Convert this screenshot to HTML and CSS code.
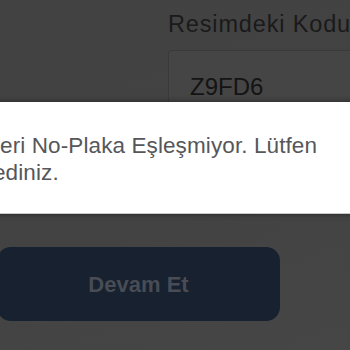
FILE: index.html
```html
<!DOCTYPE html>
<html lang="tr">
<head>
<meta charset="utf-8">
<title>Doğrulama</title>
<link rel="stylesheet" href="styles.css">
</head>
<body>
<main class="page">
  <div class="field">
    <label class="field-label" for="code">Resimdeki Kodu</label>
    <div class="field-input" id="code">Z9FD6</div>
  </div>
  <div class="actions">
    <button class="btn-primary" type="button">Devam Et</button>
  </div>
</main>
<div class="modal" role="dialog">
  <p class="modal-text"><span class="line-first">Seri No-Plaka Eşleşmiyor. Lütfen</span><br>ediniz.</p>
</div>
</body>
</html>
```
FILE: styles.css
```css
html, body {
  margin: 0;
  padding: 0;
}
body {
  width: 350px;
  height: 350px;
  overflow: hidden;
  position: relative;
  background: linear-gradient(160deg, #424242 0%, #434343 60%, #464646 100%);
  font-family: "Liberation Sans", Arial, sans-serif;
}
.page {
  display: flex;
  flex-direction: column;
}
.field {
  margin-left: 168px;
  padding-top: 11px;
  display: flex;
  flex-direction: column;
}
.field-label {
  font-size: 23.5px;
  line-height: 27px;
  letter-spacing: 0.85px;
  color: #1a1a1a;
  white-space: nowrap;
}
.field-input {
  margin-top: 12px;
  height: 70px;
  box-sizing: border-box;
  border: 1px solid #3a3a3a;
  border-right: none;
  border-radius: 4px 0 0 4px;
  background: #454545;
  padding: 22px 0 0 21px;
  font-size: 24px;
  line-height: 28px;
  color: #141414;
}
.actions {
  margin-top: 127px;
  margin-left: -3px;
}
.btn-primary {
  display: flex;
  align-items: center;
  justify-content: center;
  width: 283px;
  height: 74px;
  border: none;
  border-radius: 14px;
  background: #18212f;
  color: #474c55;
  font-family: "Liberation Sans", Arial, sans-serif;
  font-weight: bold;
  font-size: 22px;
  padding: 2px 0 0;
}
.modal {
  position: absolute;
  top: 102px;
  left: -40px;
  right: -10px;
  height: 112px;
  box-sizing: border-box;
  background: #ffffff;
  border-bottom: 1px solid #c9c9c9;
  box-shadow: 0 0 6px rgba(0, 0, 0, 0.45);
  padding: 30px 0 0 33px;
}
.modal-text {
  margin: 0;
  font-size: 22.5px;
  line-height: 27px;
  letter-spacing: 0.1px;
  color: #56575a;
  white-space: nowrap;
}
.line-first {
  margin-left: -8px;
}
```
